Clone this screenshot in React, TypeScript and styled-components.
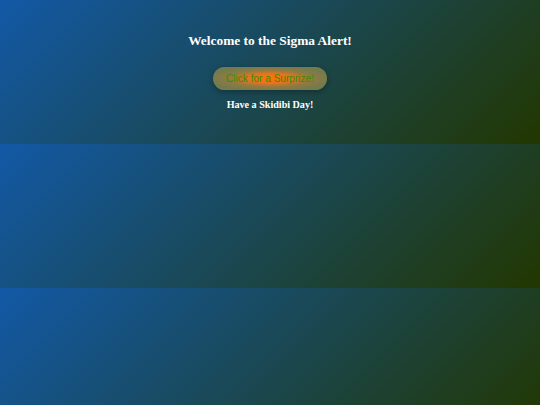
import styled, { createGlobalStyle } from "styled-components";

const GlobalStyle = createGlobalStyle`
  body {
    margin: 0;
    padding: 30px 0 32px;
    background: linear-gradient(135deg, #1259a6, #223700);
    font-family: "Liberation Serif", "Times New Roman", serif;
    color: #ffffff;
  }
`;

const Wrapper = styled.div`
  display: flex;
  flex-direction: column;
  align-items: center;
  text-align: center;
`;

const Title = styled.h1`
  margin: 0 0 15px;
  font-size: 13.4px;
  font-weight: bold;
  line-height: 22px;
`;

const SurpriseButton = styled.button`
  width: 114px;
  height: 23px;
  padding: 0;
  border: none;
  border-radius: 12px;
  background: radial-gradient(
    ellipse at center,
    #ff7300 0%,
    #e67420 28%,
    #907a42 52%,
    #737b4d 75%
  );
  color: #3b8a06;
  font-family: "Liberation Sans", Arial, sans-serif;
  font-size: 10.1px;
  box-shadow: 0 2px 6px rgba(0, 0, 0, 0.3);
  cursor: pointer;
`;

const Message = styled.p`
  margin: 8px 0 0;
  font-size: 10.1px;
  font-weight: bold;
  line-height: 14px;
`;

const App = () => {
  return (
    <>
      <GlobalStyle />
      <Wrapper>
        <Title>Welcome to the Sigma Alert!</Title>
        <SurpriseButton>Click for a Surprize!</SurpriseButton>
        <Message>Have a Skidibi Day!</Message>
      </Wrapper>
    </>
  );
};

export default App;
